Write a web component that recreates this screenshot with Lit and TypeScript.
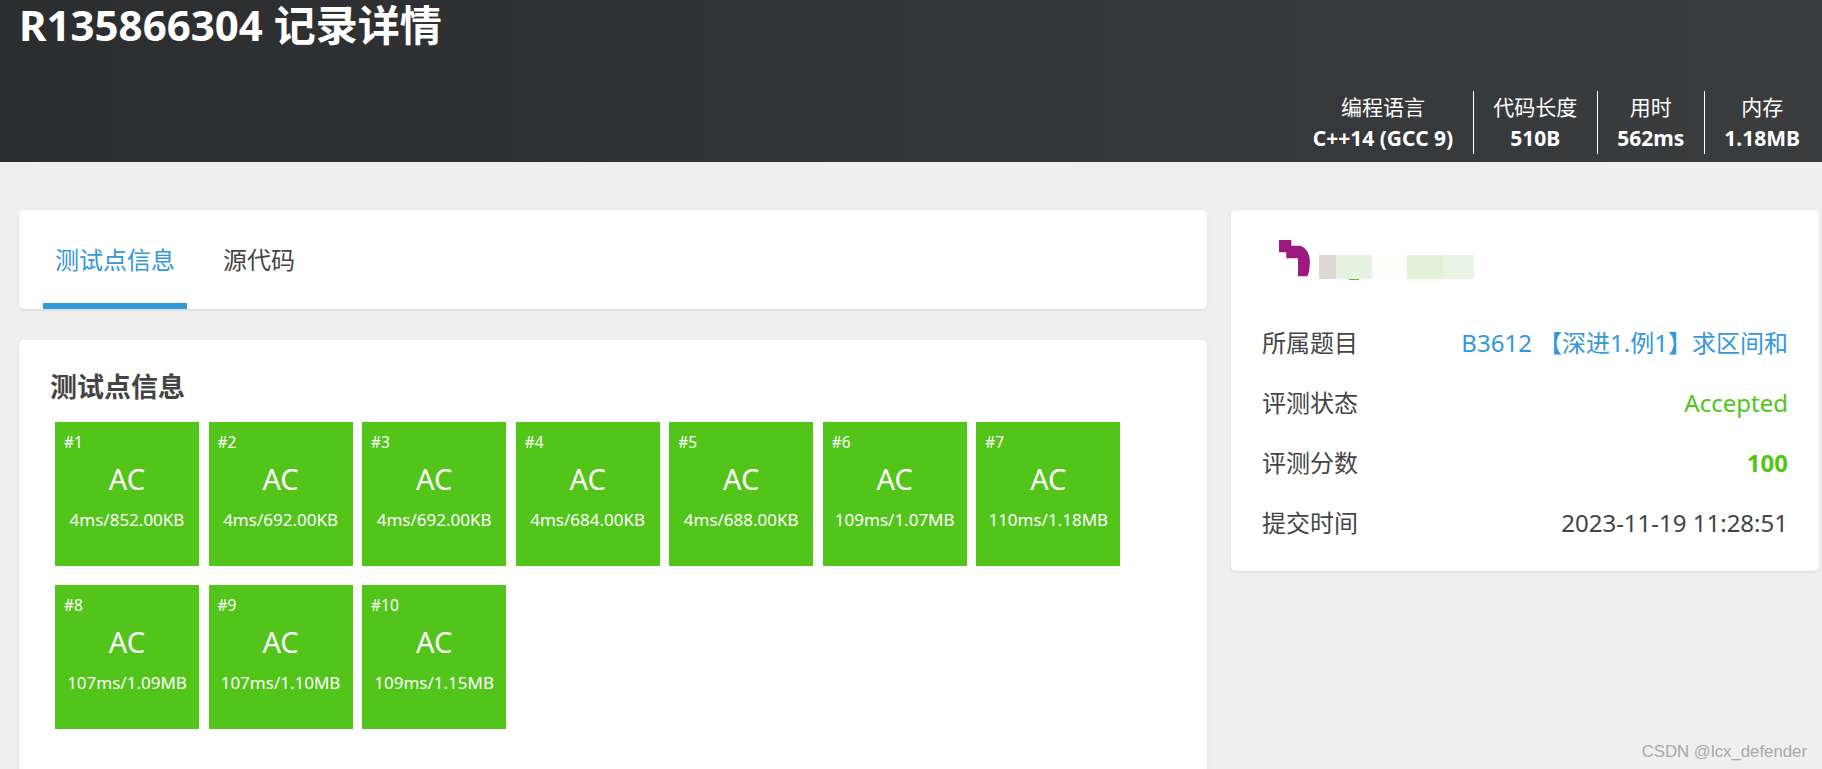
import { LitElement, html, css } from "lit";
import { customElement } from "lit/decorators.js";

const tests = [
  ["#1", "4ms/852.00KB"],
  ["#2", "4ms/692.00KB"],
  ["#3", "4ms/692.00KB"],
  ["#4", "4ms/684.00KB"],
  ["#5", "4ms/688.00KB"],
  ["#6", "109ms/1.07MB"],
  ["#7", "110ms/1.18MB"],
  ["#8", "107ms/1.09MB"],
  ["#9", "107ms/1.10MB"],
  ["#10", "109ms/1.15MB"],
];

const stats = [
  ["编程语言", "C++14 (GCC 9)"],
  ["代码长度", "510B"],
  ["用时", "562ms"],
  ["内存", "1.18MB"],
];

@customElement("app-root")
export class AppRoot extends LitElement {
  static styles = css`
    :host {
      display: block;
      height: 769px;
      overflow: hidden;
      position: relative;
      background: #efefef;
      color: #444;
      font-family: "Noto Sans", "Noto Sans CJK SC", sans-serif;
    }
    .hero {
      height: 162px;
      box-sizing: border-box;
      background: linear-gradient(90deg, #2c2d2f, #3b3c3e);
      color: #fff;
      padding: 0 22px 8px 19px;
      display: flex;
      flex-direction: column;
      justify-content: space-between;
    }
    h1 {
      margin: 0;
      font-size: 42px;
      line-height: 50px;
      font-weight: 700;
    }
    .stats {
      display: flex;
      justify-content: flex-end;
    }
    .stat {
      padding: 0 19.5px;
      height: 63px;
      border-right: 1px solid #fff;
      text-align: center;
      display: flex;
      flex-direction: column;
      justify-content: center;
    }
    .stat:last-child {
      border-right: 0;
      padding-right: 0;
    }
    .stat-label {
      font-size: 21px;
      line-height: 31px;
    }
    .stat-value {
      font-size: 21px;
      line-height: 31px;
      font-weight: 700;
    }
    .main {
      display: flex;
      gap: 24px;
      padding: 48px 3px 0 19px;
      align-items: flex-start;
    }
    .left {
      width: 1188px;
      flex: none;
      display: flex;
      flex-direction: column;
      gap: 31px;
    }
    .card {
      background: #fff;
      border-radius: 5px;
      box-shadow: 0 1px 3px rgba(0, 0, 0, 0.1);
    }
    .tabs {
      height: 99px;
      display: flex;
      gap: 24px;
      padding-left: 24px;
    }
    .tab {
      width: 144px;
      box-sizing: border-box;
      text-align: center;
      font-size: 24px;
      line-height: 100px;
      height: 99px;
    }
    .tab.plain {
      width: auto;
      padding: 0 12px;
    }
    .tab.active {
      color: #3498db;
      border-bottom: 6px solid #3498db;
    }
    .detail {
      height: 440px;
      box-sizing: border-box;
      padding: 23px 31px 0 31px;
    }
    h2 {
      margin: 0 0 12px;
      font-size: 27px;
      line-height: 47px;
      font-weight: 700;
    }
    .grid {
      display: flex;
      flex-wrap: wrap;
      column-gap: 9.55px;
      row-gap: 19px;
      padding-left: 5px;
    }
    .tile {
      width: 144px;
      height: 144px;
      background: #52c41a;
      color: #fff;
      text-align: center;
    }
    .tile-id {
      font-size: 15.5px;
      line-height: 20px;
      padding: 10px 0 0 9px;
      text-align: left;
    }
    .tile-status {
      font-size: 29px;
      line-height: 40px;
      margin-top: 7px;
    }
    .tile-info {
      font-size: 17px;
      line-height: 24px;
      margin-top: 9px;
    }
    .side {
      width: 588px;
      flex: none;
      height: 361px;
      box-sizing: border-box;
      padding: 31px 31px 0 31px;
    }
    .user {
      display: flex;
      align-items: flex-end;
      gap: 9px;
      height: 39px;
      padding-left: 17px;
    }
    .user svg {
      display: block;
      margin-bottom: 3px;
    }
    .blur {
      display: flex;
      height: 25px;
      align-items: flex-start;
    }
    .blur span {
      display: block;
      height: 24px;
    }
    .b1 { width: 17px; background: #ddd8d2; }
    .b2 {
      width: 36px;
      background: #e6f3e0;
      display: flex !important;
      justify-content: center;
    }
    .b2::after {
      content: "";
      display: block;
      width: 10px;
      height: 1px;
      margin-top: 24px;
      background: #52c41a;
    }
    .b3 { width: 35px; background: #fdfdfb; }
    .b4 { width: 36px; background: #e1f2d9; }
    .b5 { width: 31px; background: #e8f4e3; }
    .rows {
      margin-top: 33px;
      display: flex;
      flex-direction: column;
    }
    .row {
      display: flex;
      justify-content: space-between;
      font-size: 24px;
      line-height: 60px;
      height: 60px;
    }
    .link { color: #3498db; }
    .ok { color: #52c41a; }
    .bold { font-weight: 700; }
    .mark {
      position: absolute;
      right: 15px;
      bottom: 7px;
      font-family: "Liberation Sans", sans-serif;
      font-size: 16.8px;
      line-height: 20px;
      color: #a8a8a8;
    }
  `;

  render() {
    return html`
      <header class="hero">
        <h1>R135866304 记录详情</h1>
        <div class="stats">
          ${stats.map(
            ([l, v]) => html`<div class="stat">
              <div class="stat-label">${l}</div>
              <div class="stat-value">${v}</div>
            </div>`
          )}
        </div>
      </header>
      <div class="main">
        <div class="left">
          <div class="card tabs">
            <div class="tab active">测试点信息</div>
            <div class="tab plain">源代码</div>
          </div>
          <div class="card detail">
            <h2>测试点信息</h2>
            <div class="grid">
              ${tests.map(
                ([id, info]) => html`<div class="tile">
                  <div class="tile-id">${id}</div>
                  <div class="tile-status">AC</div>
                  <div class="tile-info">${info}</div>
                </div>`
              )}
            </div>
          </div>
        </div>
        <aside class="card side">
          <div class="user">
            <svg width="31" height="37" viewBox="0 0 31 37">
              <path d="M0 0H12.3V5.7H20.7C27 7 31 14 30.9 22C30.8 28 30 33 28.5 36.3H19V18.3H7.3V12.3H0Z" fill="#9c1a7f"></path>
            </svg>
            <div class="blur">
              <span class="b1"></span><span class="b2"></span><span class="b3"></span><span class="b4"></span><span class="b5"></span>
            </div>
          </div>
          <div class="rows">
            <div class="row"><span>所属题目</span><span class="link">B3612 【深进1.例1】求区间和</span></div>
            <div class="row"><span>评测状态</span><span class="ok">Accepted</span></div>
            <div class="row"><span>评测分数</span><span class="ok bold">100</span></div>
            <div class="row"><span>提交时间</span><span>2023-11-19 11:28:51</span></div>
          </div>
        </aside>
      </div>
      <div class="mark">CSDN @lcx_defender</div>
    `;
  }
}
